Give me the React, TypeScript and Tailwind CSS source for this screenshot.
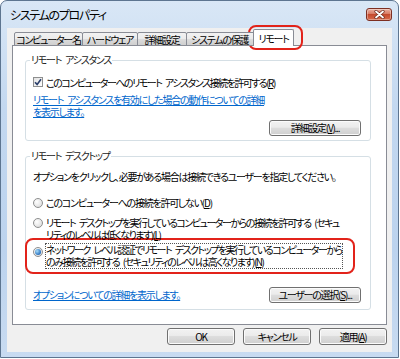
import type { ReactNode } from "react";

const font = "font-['Noto_Sans_CJK_JP','Noto_Sans',sans-serif] [font-feature-settings:'palt']";
const body = "text-[10px] tracking-[-1.25px]";
const S = "\u2002";

function Key({ k }: { k: string }) {
  return (
    <>
      (<span className="underline">{k}</span>)
    </>
  );
}

function Btn({ children, className = "" }: { children: ReactNode; className?: string }) {
  return (
    <div
      className={`flex h-[16px] items-center justify-center rounded-[3px] border border-[#707070] bg-[linear-gradient(#f2f2f2,#ebebeb_45%,#dddddd_50%,#cfcfcf)] leading-none text-black shadow-[inset_0_0_0_1px_#fbfbfb] ${body} ${className}`}
    >
      {children}
    </div>
  );
}

function Radio({ checked = false }: { checked?: boolean }) {
  return (
    <span className="mt-[1px] flex h-[10px] w-[10px] shrink-0 items-center justify-center rounded-full border border-[#8e8f8f] bg-[radial-gradient(circle_at_35%_35%,#ffffff,#d6d6d6)]">
      {checked && (
        <span className="h-[6px] w-[6px] rounded-full bg-[radial-gradient(circle_at_35%_35%,#a7dcf8,#2a72c0_70%,#1b4f92)]" />
      )}
    </span>
  );
}

function Tab({ label, w, active = false, start = false }: { label: string; w: string; active?: boolean; start?: boolean }) {
  if (active) {
    return (
      <div
        className={`relative z-10 -ml-[2px] flex h-[17px] ${w} items-center justify-center rounded-t-[2px] border border-b-0 border-[#898c95] bg-white ${body}`}
      >
        {label}
      </div>
    );
  }
  return (
    <div
      className={`-ml-px flex h-[14px] ${w} items-center overflow-hidden whitespace-nowrap rounded-t-[2px] border border-[#898c95] bg-[linear-gradient(#f2f2f2,#ebebeb_50%,#dddddd_50%,#cfcfcf)] first:ml-0 ${start ? "justify-start pl-[4px]" : "justify-center"} ${body}`}
    >
      {label}
    </div>
  );
}

function Group({ title, children, className = "" }: { title: string; children: ReactNode; className?: string }) {
  return (
    <fieldset className={`rounded-[3px] border border-[#d5dfe5] p-0 ${className}`}>
      <legend className={`ml-[4px] px-[1px] leading-[14px] text-[#222222] ${body}`}>{title}</legend>
      {children}
    </fieldset>
  );
}

export default function App() {
  return (
    <div className={`relative h-[359px] w-[400px] overflow-hidden bg-white text-black ${font}`}>
      {/* window frame */}
      <div className="flex h-[358px] w-[399px] flex-col rounded-t-[7px] border border-[#5d7590] bg-[linear-gradient(180deg,#d9e7f6,#c3d8f0_30%,#bcd3ee_70%,#c8dbf1)] px-[6px] pb-[5px]">
        {/* title bar */}
        <div className="flex h-[27px] shrink-0 items-center justify-between pl-[3px]">
          <span className="text-[12px] leading-none tracking-[-1.3px] text-black">システムのプロパティ</span>
          <div className="flex h-[13px] w-[26px] items-center justify-center rounded-[3px] border border-[#7d2f22] bg-[linear-gradient(#eab1a3,#d87a62_45%,#c44a2e_50%,#d86b4c)] shadow-[inset_0_0_0_1px_rgba(255,255,255,0.35)]">
            <svg width="11" height="9" viewBox="0 0 11 9">
              <path d="M2 1.5 L9 7.5 M9 1.5 L2 7.5" stroke="#6b2a1f" strokeWidth="3.2" strokeLinecap="round" />
              <path d="M2 1.5 L9 7.5 M9 1.5 L2 7.5" stroke="#ffffff" strokeWidth="1.8" strokeLinecap="round" />
            </svg>
          </div>
        </div>

        {/* client area */}
        <div className="flex flex-1 flex-col bg-[#f0f0f0] px-[5px] pt-[1px]">
          {/* tabs */}
          <div className="relative z-10 -mb-px flex items-end pl-[2px]">
            <Tab label="コンピューター名" w="w-[69px]" />
            <Tab label="ハードウェア" w="w-[56px]" />
            <Tab label="詳細設定" w="w-[50px]" />
            <Tab label="システムの保護" w="w-[69px]" start />
            <Tab label="リモート" w="w-[41px]" active />
          </div>

          {/* tab panel */}
          <div className="h-[280px] border border-[#898c95] bg-white pl-[12px] pr-[15px] pt-[7px]">
            <Group title={`リモート${S}アシスタンス`}>
              <div className={`pb-[4px] pl-[7px] pr-[9px] pt-[8px] ${body}`}>
                <div className="flex h-[14px] items-center gap-[3px]">
                  <span className="flex h-[10px] w-[10px] items-center justify-center border border-[#8e8f8f] bg-[linear-gradient(135deg,#e2e2e2,#ffffff)]">
                    <svg width="8" height="8" viewBox="0 0 8 8">
                      <path d="M1 4.2 L3.1 6.4 L7 1.2" fill="none" stroke="#2b3f6b" strokeWidth="1.6" />
                    </svg>
                  </span>
                  <span className="tracking-[-1.5px]">
                    {`このコンピューターへのリモート${S}アシスタンス接続を許可する`}
                    <Key k="R" />
                  </span>
                </div>
                <div className="mt-[5px] leading-[12px] text-[#0066cc] underline">
                  {`リモート${S}アシスタンスを有効にした場合の動作についての詳細`}
                  <br />
                  を表示します。
                </div>
                <div className="mt-[2px] flex justify-end">
                  <Btn className="w-[92px]">
                    詳細設定<Key k="V" />...
                  </Btn>
                </div>
              </div>
            </Group>

            <Group title={`リモート${S}デスクトップ`} className="mt-[8px]">
              <div className={`pb-[6px] pl-[7px] pr-[9px] pt-[8px] leading-[12px] ${body}`}>
                <div className="whitespace-nowrap">オプションをクリックし、必要がある場合は接続できるユーザーを指定してください。</div>
                <div className="mt-[14px] flex gap-[3px]">
                  <Radio />
                  <span>
                    このコンピューターへの接続を許可しない<Key k="D" />
                  </span>
                </div>
                <div className="mt-[8px] flex gap-[3px]">
                  <Radio />
                  <span className="whitespace-nowrap tracking-[-1.5px]">
                    {`リモート${S}デスクトップを実行しているコンピューターからの接続を許可する${S}(セキュ`}
                    <br />
                    リティのレベルは低くなります)<Key k="L" />
                  </span>
                </div>
                <div className="-ml-[8px] -mt-[3px] w-[330px] rounded-[8px] border-2 border-[#e2231a] pb-[3px] pl-[6px] pt-[3px]">
                  <div className="flex gap-[2px]">
                    <span className="mt-[3px]">
                      <Radio checked />
                    </span>
                    <span className="whitespace-nowrap border border-dotted border-[#555] tracking-[-1.5px]">
                      {`ネットワーク${S}レベル認証でリモート${S}デスクトップを実行しているコンピューターから`}
                      <br />
                      {`のみ接続を許可する${S}(セキュリティのレベルは高くなります)`}
                      <Key k="N" />
                    </span>
                  </div>
                </div>
                <div className="mt-[13px] flex items-center justify-between">
                  <span className="text-[#0066cc] underline">オプションについての詳細を表示します。</span>
                  <Btn className="w-[92px]">
                    ユーザーの選択<Key k="S" />...
                  </Btn>
                </div>
              </div>
            </Group>
          </div>

          {/* dialog buttons */}
          <div className="mt-[3px] flex justify-end gap-[8px]">
            <Btn className="h-[17px] w-[68px] border-[#3c7fb1] shadow-[inset_0_0_0_1px_#b9e3f9]">OK</Btn>
            <Btn className="h-[17px] w-[68px]">キャンセル</Btn>
            <Btn className="h-[17px] w-[68px]">
              適用<Key k="A" />
            </Btn>
          </div>
        </div>
      </div>

      {/* red annotation around the active tab */}
      <div className="pointer-events-none absolute left-[248px] top-[25px] h-[25px] w-[55px] rounded-[8px] border-2 border-[#e2231a]" />
    </div>
  );
}
